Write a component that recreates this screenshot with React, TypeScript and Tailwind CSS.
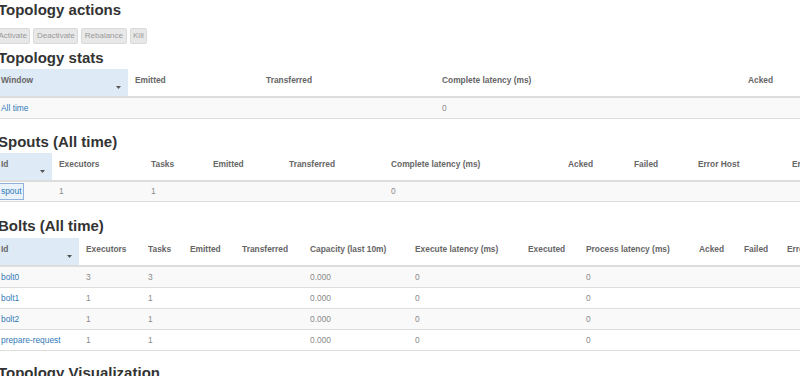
import React from "react";

type Col = { label: string; w: string };
type Cell = { text: string; link?: boolean; focus?: boolean };

const statsCols: Col[] = [
  { label: "Window", w: "w-[134px]" },
  { label: "Emitted", w: "w-[131px]" },
  { label: "Transferred", w: "w-[176px]" },
  { label: "Complete latency (ms)", w: "w-[306px]" },
  { label: "Acked", w: "w-[150px]" },
];

const spoutCols: Col[] = [
  { label: "Id", w: "w-[58px]" },
  { label: "Executors", w: "w-[92px]" },
  { label: "Tasks", w: "w-[62px]" },
  { label: "Emitted", w: "w-[76px]" },
  { label: "Transferred", w: "w-[102px]" },
  { label: "Complete latency (ms)", w: "w-[177px]" },
  { label: "Acked", w: "w-[66px]" },
  { label: "Failed", w: "w-[64px]" },
  { label: "Error Host", w: "w-[94px]" },
  { label: "Error Port", w: "w-[100px]" },
];

const boltCols: Col[] = [
  { label: "Id", w: "w-[85px]" },
  { label: "Executors", w: "w-[62px]" },
  { label: "Tasks", w: "w-[42px]" },
  { label: "Emitted", w: "w-[52px]" },
  { label: "Transferred", w: "w-[68px]" },
  { label: "Capacity (last 10m)", w: "w-[105px]" },
  { label: "Execute latency (ms)", w: "w-[113px]" },
  { label: "Executed", w: "w-[58px]" },
  { label: "Process latency (ms)", w: "w-[113px]" },
  { label: "Acked", w: "w-[45px]" },
  { label: "Failed", w: "w-[43px]" },
  { label: "Error Host", w: "w-[100px]" },
];

const statsRows: Cell[][] = [
  [{ text: "All time", link: true }, { text: "" }, { text: "" }, { text: "0" }, { text: "" }],
];

const spoutRows: Cell[][] = [
  [
    { text: "spout", link: true, focus: true },
    { text: "1" },
    { text: "1" },
    { text: "" },
    { text: "" },
    { text: "0" },
    { text: "" },
    { text: "" },
    { text: "" },
    { text: "" },
  ],
];

const bolt = (id: string, n: string): Cell[] => [
  { text: id, link: true },
  { text: n },
  { text: n },
  { text: "" },
  { text: "" },
  { text: "0.000" },
  { text: "0" },
  { text: "" },
  { text: "0" },
  { text: "" },
  { text: "" },
  { text: "" },
];

const boltRows: Cell[][] = [
  bolt("bolt0", "3"),
  bolt("bolt1", "1"),
  bolt("bolt2", "1"),
  bolt("prepare-request", "1"),
];

function SortCaret() {
  return (
    <svg className="absolute right-[7px] bottom-[7px]" width="5" height="3" viewBox="0 0 5 3">
      <path d="M0 0h5L2.5 3z" fill="#555" />
    </svg>
  );
}

function DataTable({ cols, rows }: { cols: Col[]; rows: Cell[][] }) {
  return (
    <table className="table-fixed border-collapse text-[8.4px]">
      <thead>
        <tr>
          {cols.map((c, i) => (
            <th
              key={i}
              className={`${c.w} relative h-[28px] border-b-2 border-[#dddddd] pl-[7px] pt-[5px] text-left align-top font-bold leading-[12px] text-[#666] whitespace-nowrap ${
                i === 0 ? "bg-[#deeaf6]" : ""
              }`}
            >
              {c.label}
              {i === 0 && <SortCaret />}
            </th>
          ))}
        </tr>
      </thead>
      <tbody>
        {rows.map((r, ri) => (
          <tr key={ri} className={ri % 2 === 0 ? "bg-[#f9f9f9]" : "bg-white"}>
            {r.map((cell, ci) => (
              <td
                key={ci}
                className="h-[21px] border-b border-[#dddddd] pl-[7px] align-middle leading-[12px] text-[#8a8a8a] whitespace-nowrap"
              >
                {cell.link ? (
                  <a
                    className={`text-[#337ab7] ${
                      cell.focus
                        ? "-ml-[1px] inline-block bg-[#eaf2fb] px-[1px] leading-[15px] outline-1 outline-[#8fb3dc]"
                        : ""
                    }`}
                  >
                    {cell.text}
                  </a>
                ) : (
                  cell.text
                )}
              </td>
            ))}
          </tr>
        ))}
      </tbody>
    </table>
  );
}

function Heading({ children }: { children: React.ReactNode }) {
  return <h2 className="ml-[4px] text-[15px] font-bold leading-[20px] text-[#333]">{children}</h2>;
}

export default function App() {
  const actions = ["Activate", "Deactivate", "Rebalance", "Kill"];
  return (
    <div className="h-[376px] w-[800px] overflow-hidden bg-white font-['Liberation_Sans',Arial,sans-serif]">
      <div className="-ml-[6px] w-[1000px]">
        <Heading>Topology actions</Heading>
        <div className="mt-[8px] flex gap-[3px] pl-[1px]">
          {actions.map((a) => (
            <button
              key={a}
              className="h-[16px] rounded-[2px] border border-[#d9d9d9] bg-[#e8e8e8] px-[2.5px] text-[8px] leading-[14px] text-[#999]"
            >
              {a}
            </button>
          ))}
        </div>

        <div className="mt-[4px]">
          <Heading>Topology stats</Heading>
          <div className="mt-[1px]">
            <DataTable cols={statsCols} rows={statsRows} />
          </div>
        </div>

        <div className="mt-[13px]">
          <Heading>Spouts (All time)</Heading>
          <div className="mt-[1px]">
            <DataTable cols={spoutCols} rows={spoutRows} />
          </div>
        </div>

        <div className="mt-[14px]">
          <Heading>Bolts (All time)</Heading>
          <div className="mt-[2px]">
            <DataTable cols={boltCols} rows={boltRows} />
          </div>
        </div>

        <div className="mt-[12px]">
          <Heading>Topology Visualization</Heading>
        </div>
      </div>
    </div>
  );
}
